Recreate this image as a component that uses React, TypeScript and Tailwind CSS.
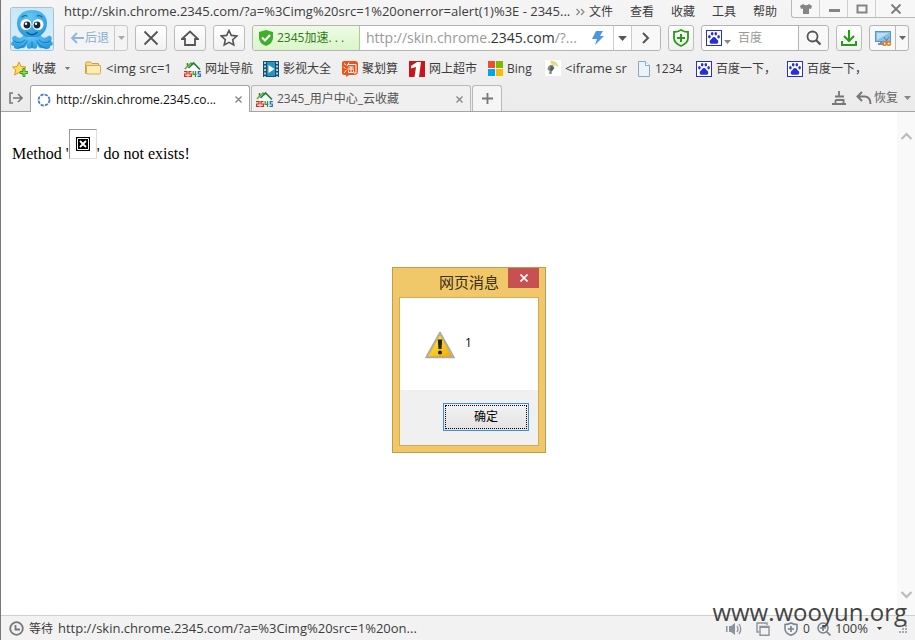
import React from "react";

type Kids = { children?: React.ReactNode };

const toolButton =
  "flex h-[26px] shrink-0 items-center justify-center rounded-[3px] border border-[#bcbcbc] bg-linear-to-b from-white to-[#f1f1f1]";

function Caret({ className = "text-[#888]" }: { className?: string }) {
  return (
    <svg viewBox="0 0 7 4" className={`h-1 w-[7px] shrink-0 ${className}`} aria-hidden="true">
      <path d="M0 0H7L3.5 4Z" fill="currentColor" />
    </svg>
  );
}

function Icon({ children, className = "size-4", box = "0 0 16 16" }: Kids & { className?: string; box?: string }) {
  return (
    <svg viewBox={box} className={`shrink-0 ${className}`} fill="none" aria-hidden="true">
      {children}
    </svg>
  );
}

function Octopus() {
  return (
    <Icon box="0 0 44 44" className="size-full">
      <defs>
        <linearGradient id="avatarBg" x1="0" y1="0" x2="0" y2="1">
          <stop offset="0" stopColor="#c9e6f8" />
          <stop offset="1" stopColor="#d9eefa" />
        </linearGradient>
        <radialGradient id="skin" cx=".45" cy=".25" r=".8">
          <stop offset="0" stopColor="#62c6f5" />
          <stop offset="1" stopColor="#2696dc" />
        </radialGradient>
      </defs>
      <rect x=".5" y=".5" width="43" height="43" rx="2" fill="url(#avatarBg)" stroke="#a3c3d8" />
      <path d="M14 26C13 31 9 32 6 29C3 28 1 31 3 34C0 36 1 39 4 39C3 42 8 43 11 41C14 42 16 40 17 37C16 41 18 43 22 41C26 43 28 41 27 37C28 40 30 42 33 41C36 43 41 42 40 39C43 39 44 36 41 34C43 31 41 28 38 29C35 32 31 31 30 26Z" fill="url(#skin)" />
      <path d="M22 3C12.500 3 7 9 7 16C7 24 12 28 16 30H28C32 28 37 24 37 16C37 9 31.500 3 22 3Z" fill="url(#skin)" />
      <path d="M4 34Q10 38 15 33M40 34Q34 38 29 33M9 41Q15 39 17 34M35 41Q29 39 27 34M22 35V40" stroke="#1679bd" strokeWidth="1" strokeLinecap="round" />
      <path d="M12 10Q14 8 17 9M32 10Q30 8 27 9" stroke="#1468a5" strokeWidth="1.200" strokeLinecap="round" />
      <circle cx="16" cy="17.500" r="5.500" fill="#fff" />
      <circle cx="28" cy="17.500" r="5.500" fill="#fff" />
      <circle cx="17" cy="18" r="3.400" fill="#12294a" />
      <circle cx="27" cy="18" r="3.400" fill="#12294a" />
      <circle cx="16" cy="16.700" r="1.200" fill="#fff" />
      <circle cx="26" cy="16.700" r="1.200" fill="#fff" />
      <path d="M17 25.500Q22 30 27 25.500" stroke="#0d578c" strokeWidth="1.300" strokeLinecap="round" />
    </Icon>
  );
}

function FolderIcon() {
  return (
    <Icon className="h-4 w-[18px]" box="0 0 18 16">
      <path d="M1.500 3.500Q1.500 2 3 2H6.500L8 3.500H14.500V13.500H1.500Z" fill="#f5dc8b" stroke="#c9a044" />
      <path d="M2.500 5.500H16.500V12.500Q16.500 14 15 14H4Q2.500 14 2.500 12.500Z" fill="#fceeb4" stroke="#d4ab4d" />
    </Icon>
  );
}

function HouseIcon() {
  return (
    <Icon className="h-4 w-[17px]" box="0 0 17 16">
      <path d="M3.500 7V10H13.500V7L8.500 3Z" fill="#fff" />
      <path d="M3.500 2V6" stroke="#8a5a2b" strokeWidth="1.500" />
      <path d="M.8 8L7 2L9 4" stroke="#43b04a" strokeWidth="1.400" />
      <path d="M4.500 7L9.500 2L16 8.500" stroke="#267f31" strokeWidth="1.600" />
      <path d="M0 10.600H3V13H.6V15.400H3.500" stroke="#e02a1d" strokeWidth="1.200" />
      <path d="M7.500 10.600H5V13H7.500V15.400H4.500" stroke="#e02a1d" strokeWidth="1.200" />
      <path d="M9.200 10V13.400H12.500M11.500 10V16" stroke="#2a9a38" strokeWidth="1.200" />
      <path d="M16.800 10.600H14.300V13H16.300V15.400H13.500" stroke="#246cc2" strokeWidth="1.200" />
    </Icon>
  );
}

function FilmIcon() {
  return (
    <Icon>
      <rect width="16" height="16" fill="#14506f" />
      <rect x="4" y="1" width="8" height="14" fill="#2a93c3" />
      <path d="M2 1V16M14 1V16" stroke="#d7edf7" strokeWidth="1.600" strokeDasharray="2 1.500" />
      <path d="M5.500 4L11.500 8L5.500 12Z" fill="#fff" />
    </Icon>
  );
}

function TaoIcon() {
  return (
    <Icon>
      <path d="M2 0H13Q16 0 16 3V10Q16 14 12 14H7L4 16V14H2Q0 14 0 12V2Q0 0 2 0Z" fill="#e9551d" />
      <path d="M2 2.500L4 4M1.500 6L3.500 7.500M2 12L4.500 9M7 1.500L5 5M6 3.500H14V12H12M6.500 6H11.500M5.500 8H12M9 6V11.500M6.500 9.500V11.500H11.500V9.500" stroke="#fff" strokeWidth="1" />
    </Icon>
  );
}

function RedOneIcon() {
  return (
    <Icon>
      <rect width="16" height="16" fill="#c9161d" />
      <path d="M2 5L8 1H12L10 16H5.500L7 6L2 7.500Z" fill="#fff" />
    </Icon>
  );
}

function WindowsIcon() {
  return (
    <Icon className="size-[15px]" box="0 0 15 15">
      <path d="M0 0H7V7H0Z" fill="#ee5024" />
      <path d="M8 0H15V7H8Z" fill="#80bb01" />
      <path d="M0 8H7V15H0Z" fill="#03a5f0" />
      <path d="M8 8H15V15H8Z" fill="#ffb902" />
    </Icon>
  );
}

function BulbIcon() {
  return (
    <Icon>
      <rect width="16" height="16" fill="#fff" />
      <path d="M5 1C9 0 13 2 13 7L10 5.500Q8 5 6 3.500Z" fill="#e4dc7b" />
      <path d="M3 7Q5 4 8 5L9.500 8L7 11L6.500 14H4L4.500 11L2.500 9.500Z" fill="#868b87" />
      <path d="M6 6L9 8L7 11L5 10Z" fill="#535a56" />
    </Icon>
  );
}

function PageIcon() {
  return (
    <Icon className="h-4 w-[14px]" box="0 0 14 16">
      <path d="M1.500 .5H8.500L12.500 4.500V15.500H1.500Z" fill="#eaf3fa" stroke="#8aa9c0" />
      <path d="M8.500 .5V4.500H12.500" fill="#fff" stroke="#8aa9c0" />
    </Icon>
  );
}

function PawIcon() {
  return (
    <Icon>
      <rect x=".5" y=".5" width="15" height="15" fill="#fff" stroke="#2530d6" />
      <g fill="#2530d6">
        <ellipse cx="3.400" cy="6.700" rx="1.300" ry="1.700" />
        <ellipse cx="6.200" cy="3.800" rx="1.300" ry="1.800" />
        <ellipse cx="9.800" cy="3.800" rx="1.300" ry="1.800" />
        <ellipse cx="12.600" cy="6.700" rx="1.300" ry="1.700" />
        <path d="M8 7C9.800 7 9.800 8.700 11.600 10C13 11.500 12.200 13.800 10.300 13.800C9 13.800 7 13.800 5.700 13.800C3.800 13.800 3 11.500 4.400 10C6.200 8.700 6.200 7 8 7Z" />
      </g>
    </Icon>
  );
}

function StarPlusIcon() {
  return (
    <Icon>
      <path d="M7 1L9 5.500L14 6L10 9L11.500 14L7 11.500L2.500 14L3.800 9L.5 6L5 5.500Z" fill="#ffdc5e" stroke="#dd9a17" />
      <path d="M11 7.500H13V10.500H16V12.500H13V15.500H11V12.500H8V10.500H11Z" fill="#8be05a" stroke="#2f9a1c" strokeWidth=".9" />
    </Icon>
  );
}

function TitleRow() {
  return (
    <div className="flex h-6 items-start">
      <div className="flex h-6 min-w-0 flex-1 items-center gap-1">
        <h1 className="min-w-0 flex-1 text-[13px] font-normal whitespace-nowrap">
          http://skin.chrome.2345.com/?a=%3Cimg%20src=1%20onerror=alert(1)%3E - 2345...
        </h1>
        <button aria-label="更多" className="shrink-0">
          <Icon className="h-2 w-[9px]" box="0 0 9 8">
            <path d="M.5 1L3.500 4L.5 7M5 1L8 4L5 7" stroke="#888" strokeWidth="1.200" />
          </Icon>
        </button>
      </div>
      <nav className="flex h-6 shrink-0 items-center gap-[17px] pr-[14px] pl-1">
        {["文件", "查看", "收藏", "工具", "帮助"].map((label) => (
          <button key={label}>{label}</button>
        ))}
      </nav>
      <div className="flex h-[18px] shrink-0 divide-x divide-[#cfcfcf] rounded-bl-[3px] border-b border-l border-[#b9b9b9] bg-[#f7f7f7]">
        <button aria-label="皮肤" className="flex w-7 items-center justify-center">
          <Icon className="h-[10px] w-3" box="0 0 12 10">
            <path d="M3 0Q6 2.500 9 0L12 2L11 5L9 4.500V10H3V4.500L1 5L0 2Z" fill="#858585" />
          </Icon>
        </button>
        <button aria-label="最小化" className="flex w-7 items-center justify-center">
          <Icon className="h-[10px] w-3" box="0 0 12 10"><path d="M1 6.500H12" stroke="#858585" strokeWidth="3" /></Icon>
        </button>
        <button aria-label="最大化" className="flex w-7 items-center justify-center">
          <Icon className="h-[10px] w-3" box="0 0 12 10"><path d="M1.500 1.500H10.500V8.500H1.500Z" stroke="#858585" strokeWidth="2" /></Icon>
        </button>
        <button aria-label="关闭" className="flex w-[39px] items-center justify-center">
          <Icon className="h-[10px] w-3" box="0 0 12 10"><path d="M1.500 .5L10.500 9.500M10.500 .5L1.500 9.500" stroke="#777" strokeWidth="1.800" /></Icon>
        </button>
      </div>
    </div>
  );
}

function ToolRow() {
  return (
    <div className="flex items-center gap-[7px] pt-px pr-[6px]">
      <div className="flex h-[26px] w-16 shrink-0 divide-x divide-[#c9c9c9] rounded-[3px] border border-[#c9c9c9] bg-[#f4f4f4]">
        <button className="flex flex-1 items-center justify-center gap-px text-[#8aaed6]">
          <Icon className="h-3 w-[14px]" box="0 0 14 12"><path d="M7 1L2 6L7 11M2 6H14" stroke="#8db5df" strokeWidth="1.800" /></Icon>
          后退
        </button>
        <button aria-label="历史" className="flex w-3 items-center justify-center"><Caret className="text-[#aaa]" /></button>
      </div>
      <button aria-label="停止" className={`w-8 ${toolButton}`}>
        <Icon><path d="M1.500 1.500L14.500 14.500M14.500 1.500L1.500 14.500" stroke="#555" strokeWidth="1.800" /></Icon>
      </button>
      <button aria-label="主页" className={`w-8 ${toolButton}`}>
        <Icon className="h-4 w-[18px]" box="0 0 18 16"><path d="M1 9L9 1.500L17 9H14V15H4V9Z" stroke="#555" strokeWidth="1.800" /></Icon>
      </button>
      <button aria-label="加入收藏" className={`w-8 ${toolButton}`}>
        <Icon className="size-[18px]" box="0 0 18 18"><path d="M9 1.500L11.300 6.400L16.700 7L12.700 10.700L13.800 16L9 13.300L4.200 16L5.300 10.700L1.300 7L6.700 6.400Z" stroke="#555" strokeWidth="1.600" /></Icon>
      </button>
      <div className="flex h-[26px] min-w-0 flex-1 rounded-[3px] border border-[#b4b4b4] bg-white">
        <button className="flex w-[107px] shrink-0 items-center gap-1 rounded-l-[3px] border-r border-[#a6cf93] bg-linear-to-b from-[#eefbe6] to-[#dbf6cb] pl-[6px] text-[#2c7a14]">
          <Icon className="h-4 w-[14px]" box="0 0 14 16">
            <path d="M7 0L14 2V8Q14 13 7 16Q0 13 0 8V2Z" fill="#3fae2c" />
            <path d="M3 7.500L6 10.500L11 5" stroke="#fff" strokeWidth="2" />
          </Icon>
          2345加速. . .
        </button>
        <div className="relative flex min-w-0 flex-1 items-center">
          <input aria-label="地址" className="peer h-full w-full min-w-0 bg-transparent px-[6px] text-sm outline-none" />
          <span className="pointer-events-none absolute inset-x-0 overflow-hidden pl-[6px] text-sm whitespace-nowrap text-[#999] peer-focus:hidden">
            http://skin.chrome.<span className="text-[#333]">2345.com</span>/?...
          </span>
        </div>
        <button aria-label="极速模式" className="flex w-[30px] shrink-0 items-center justify-center">
          <Icon className="h-[14px] w-3" box="0 0 12 14"><path d="M4 0H11L8 5H12L3 14L5 8H0Z" fill="#4a98df" /></Icon>
        </button>
        <button aria-label="展开地址" className="flex w-[18px] shrink-0 items-center justify-center border-l border-[#ccc]"><Caret className="h-[5px] w-[9px] text-[#555]" /></button>
        <button aria-label="转到" className="flex w-[29px] shrink-0 items-center justify-center rounded-r-[3px] border-l border-[#ccc] bg-[#f8f8f8]">
          <Icon className="h-3 w-2" box="0 0 8 12"><path d="M1 1L6 6L1 11" stroke="#555" strokeWidth="2" /></Icon>
        </button>
      </div>
      <button aria-label="安全" className={`w-[26px] ${toolButton}`}>
        <Icon className="h-[18px] w-4" box="0 0 16 18">
          <path d="M8 1Q11 3 15 3V9Q15 14 8 17Q1 14 1 9V3Q5 3 8 1Z" stroke="#279b18" strokeWidth="1.800" />
          <path d="M8 5V13M4 9H12" stroke="#279b18" strokeWidth="2" />
        </Icon>
      </button>
      <div className="flex h-[26px] w-32 shrink-0 rounded-[3px] border border-[#b4b4b4] bg-white">
        <button aria-label="搜索引擎" className="flex shrink-0 items-center gap-[2px] pl-1"><PawIcon /><span className="pt-2"><Caret /></span></button>
        <input aria-label="搜索" placeholder="百度" className="min-w-0 flex-1 pl-[7px] outline-none placeholder:text-[#999]" />
        <button aria-label="搜索" className="flex w-[30px] shrink-0 items-center justify-center rounded-r-[3px] border-l border-[#b4b4b4] bg-[#f8f8f8]">
          <Icon><circle cx="6.500" cy="6.500" r="5" stroke="#555" strokeWidth="1.800" /><path d="M10 10L14.500 14.500" stroke="#555" strokeWidth="2.200" /></Icon>
        </button>
      </div>
      <button aria-label="下载" className={`w-[26px] ${toolButton}`}>
        <Icon><path d="M8 0V11M3 6L8 11L13 6M1 11V15H15V11" stroke="#279b18" strokeWidth="2" /></Icon>
      </button>
      <div className="flex h-[26px] w-10 shrink-0 divide-x divide-[#bbb] rounded-[3px] border border-[#b4b4b4] bg-[#f8f8f8]">
        <button aria-label="截图" className="flex flex-1 items-center justify-center">
          <Icon>
            <rect x=".5" y="1.500" width="15" height="10" fill="#7fc0ec" stroke="#5e94bd" />
            <path d="M2 3H14L2 10Z" fill="#b9def6" />
            <path d="M3 14H9M6 12V14" stroke="#6895b8" strokeWidth="2" />
            <path d="M9 7L12 11M14 7L11 11" stroke="#777" />
            <circle cx="9.500" cy="13.500" r="1.800" stroke="#e27a1c" strokeWidth="1.500" />
            <circle cx="13.700" cy="13.500" r="1.800" stroke="#e27a1c" strokeWidth="1.500" />
          </Icon>
        </button>
        <button aria-label="截图选项" className="flex w-3 items-center justify-center"><Caret className="text-[#666]" /></button>
      </div>
    </div>
  );
}

const bookmarks: { icon: React.ReactNode; label: string; width: string }[] = [
  { icon: <FolderIcon />, label: "<img src=1", width: "w-[89px] text-[13px]" },
  { icon: <HouseIcon />, label: "网址导航", width: "w-[68px]" },
  { icon: <FilmIcon />, label: "影视大全", width: "w-[68px]" },
  { icon: <TaoIcon />, label: "聚划算", width: "w-14" },
  { icon: <RedOneIcon />, label: "网上超市", width: "w-[68px]" },
  { icon: <WindowsIcon />, label: "Bing", width: "w-[46px]" },
  { icon: <BulbIcon />, label: "<iframe sr", width: "w-[81px] text-[13px]" },
  { icon: <PageIcon />, label: "1234", width: "w-12" },
  { icon: <PawIcon />, label: "百度一下，", width: "w-20" },
  { icon: <PawIcon />, label: "百度一下，", width: "w-20" },
];

function BookmarkRow() {
  return (
    <div className="flex h-[34px] items-center gap-[11px] overflow-hidden pt-px pl-[11px]">
      <button className="flex w-[61px] shrink-0 items-center gap-1"><StarPlusIcon />收藏<span className="pl-1"><Caret className="h-[3px] w-[5px] text-[#777]" /></span></button>
      {bookmarks.map(({ icon, label, width }, i) => (
        <a key={i} href="#" className={`flex shrink-0 items-center gap-1 whitespace-nowrap ${width}`}>{icon}{label}</a>
      ))}
    </div>
  );
}

function CloseX() {
  return <Icon className="size-[7px]" box="0 0 7 7"><path d="M.5 .5L6.500 6.500M6.500 .5L.5 6.500" stroke="#888" strokeWidth="1.400" /></Icon>;
}

function TabRow() {
  return (
    <div className="flex h-[27px] items-end border-b border-[#a3a3a3]">
      <button aria-label="侧边栏" className="flex h-[26px] w-[29px] shrink-0 items-center justify-center">
        <Icon className="h-3 w-[14px]" box="0 0 14 12"><path d="M4 1H1V11H4M4 6H13M9 2L13 6L9 10" stroke="#777" strokeWidth="1.600" /></Icon>
      </button>
      <div className="-mb-px flex h-[27px] w-[220px] items-center gap-[5px] rounded-t-[3px] border border-b-0 border-[#a3a3a3] bg-white pt-px pr-[7px] pl-[6px] text-[#111]">
        <Icon className="size-[14px]" box="0 0 14 14"><circle cx="7" cy="7" r="5.500" stroke="#5277c8" strokeWidth="1.800" strokeDasharray="3.200 1.120" /></Icon>
        <span className="min-w-0 flex-1 whitespace-nowrap">http://skin.chrome.2345.co...</span>
        <button aria-label="关闭标签"><CloseX /></button>
      </div>
      <div className="ml-px flex h-[26px] w-[220px] items-center gap-1 rounded-t-[3px] border border-b-0 border-[#b9b9b9] bg-[#f0f0f0] pt-px pr-[7px] pl-1 text-[#555]">
        <HouseIcon />
        <span className="min-w-0 flex-1 whitespace-nowrap">2345_用户中心_云收藏</span>
        <button aria-label="关闭标签"><CloseX /></button>
      </div>
      <button aria-label="新标签" className="ml-px flex h-[26px] w-[30px] items-center justify-center rounded-t-[3px] border border-b-0 border-[#b9b9b9] bg-[#f5f5f5]">
        <Icon className="size-[11px]" box="0 0 11 11"><path d="M5.500 0V11M0 5.500H11" stroke="#777" strokeWidth="1.800" /></Icon>
      </button>
      <div className="ml-auto flex h-[26px] items-center gap-[10px] pr-1 text-[#666]">
        <button aria-label="清理"><Icon className="size-[14px]" box="0 0 14 14"><path d="M7 0V5M3 5.500H12M3.500 9H11.500V12.500M3.500 9V12.500M0 13H14" stroke="#777" strokeWidth="1.800" /></Icon></button>
        <button className="flex items-center gap-[2px]">
          <Icon className="h-[14px] w-4" box="0 0 16 14"><path d="M6 1L1.500 5.500L6 10M2 5.500H9Q14.500 6 14.500 13" stroke="#777" strokeWidth="2" /></Icon>
          恢复
          <span className="pl-1"><Caret /></span>
        </button>
      </div>
    </div>
  );
}

function AlertDialog() {
  return (
    <section role="alertdialog" aria-labelledby="alert-title" className="absolute top-[267px] left-[391px] w-[154px] border border-[#c49a4c] bg-[#f0c869] px-[6px] pb-[6px] text-black">
      <header className="flex h-[29px] items-start justify-end">
        <h2 id="alert-title" className="pt-1 pr-[9px] text-[15px] leading-5 text-[#3a2d10]">网页消息</h2>
        <button aria-label="关闭" className="flex h-5 w-[31px] items-center justify-center bg-[#c75050]">
          <Icon className="size-2" box="0 0 8 8"><path d="M.5 .5L7.500 7.500M7.500 .5L.5 7.500" stroke="#fff" strokeWidth="1.600" /></Icon>
        </button>
      </header>
      <div className="border border-[#d2ab58] bg-[#f0f0f0]">
        <div className="flex h-[92px] items-start gap-[10px] bg-white pt-[33px] pl-[25px]">
          <Icon className="h-7 w-[30px]" box="0 0 30 28">
            <defs>
              <linearGradient id="warn" x1="0" y1="0" x2="1" y2="1">
                <stop offset="0" stopColor="#fff04a" />
                <stop offset="1" stopColor="#f0a800" />
              </linearGradient>
            </defs>
            <path d="M15 1.500L29 26.500H1Z" fill="#ddd" stroke="#a9a9b2" strokeWidth="1.600" strokeLinejoin="round" />
            <path d="M15 3.500L27 25.500H3Z" fill="url(#warn)" stroke="#c7a11a" strokeWidth=".6" />
            <path d="M12.800 8.500H17.200L16.500 18H13.500Z" fill="#222" />
            <circle cx="15" cy="21.500" r="2" fill="#222" />
          </Icon>
          <p className="pt-1 leading-4">1</p>
        </div>
        <div className="flex h-[55px] items-start justify-end pt-[13px] pr-[9px]">
          <button className="h-7 w-[86px] border border-[#3c8fe0] bg-linear-to-b from-[#f2f2f2] to-[#e3e3e3] p-px">
            <span className="flex h-full items-center justify-center border border-dotted border-black">确定</span>
          </button>
        </div>
      </div>
    </section>
  );
}

function PageArea() {
  return (
    <main className="flex min-h-0 flex-1 justify-between bg-white">
      <p className="flex h-[52px] items-end pl-[11px] font-['Liberation_Serif',serif] text-base leading-5 text-black">
        <span>Method '</span>
        <span role="img" aria-label="图片无法显示" className="mb-[5px] flex h-[30px] w-7 items-center justify-center border border-t-[#999] border-r-[#ddd] border-b-[#ddd] border-l-[#999]">
          <Icon className="size-[14px]" box="0 0 14 14"><path d="M0 0H14V14H0Z" fill="#000" /><path d="M1.500 1.500H12.500V12.500H1.500Z" stroke="#fff" /><path d="M4 4L10 10M10 4L4 10" stroke="#fff" strokeWidth="1.800" /></Icon>
        </span>
        <span>' do not exists!</span>
      </p>
      <div className="flex w-[18px] flex-col items-center justify-between bg-[#f9f9f9] pt-5 pb-4">
        <button aria-label="向上滚动"><Icon className="h-2 w-[11px]" box="0 0 11 8"><path d="M.5 7L5.500 2L10.500 7" stroke="#bbb" strokeWidth="2.200" /></Icon></button>
        <button aria-label="向下滚动"><Icon className="h-2 w-[11px]" box="0 0 11 8"><path d="M.5 1L5.500 6L10.500 1" stroke="#bbb" strokeWidth="2.200" /></Icon></button>
      </div>
    </main>
  );
}

function StatusBar() {
  return (
    <footer className="flex h-[25px] shrink-0 items-center justify-between border-t border-[#cfcfcf] bg-[#f2f2f2] px-2 pt-[2px]">
      <p className="flex items-center gap-[5px]">
        <Icon className="size-[15px]" box="0 0 15 15"><circle cx="7.500" cy="7.500" r="6.300" stroke="#777" strokeWidth="1.800" /><path d="M6.500 4V8.500H11" stroke="#777" strokeWidth="1.800" /></Icon>
        <span>等待</span>
        <span className="text-[13px]">http://skin.chrome.2345.com/?a=%3Cimg%20src=1%20on...</span>
      </p>
      <div className="flex items-center">
        <button aria-label="声音" className="mr-[14px]">
          <Icon className="h-[14px] w-4" box="0 0 16 14"><path d="M0 4H1.500V10H0ZM3 4H5L9 1V13L5 10H3Z" fill="#8a939c" /><path d="M11 4Q13 7 11 10M13 2Q16.500 7 13 12" stroke="#8a939c" strokeWidth="1.300" /></Icon>
        </button>
        <button aria-label="窗口" className="mr-[14px]">
          <Icon className="size-[14px]" box="0 0 14 14"><path d="M3 10H1V1H11V3M4 4.500H13V13.200H4Z" stroke="#8a939c" strokeWidth="1.400" /><path d="M4 5H13" stroke="#8a939c" strokeWidth="2" /></Icon>
        </button>
        <button className="mr-[7px] flex items-center gap-[5px]">
          <Icon className="size-[14px]" box="0 0 14 14"><path d="M7 1Q10 2.500 13 2.500V7Q13 11 7 13.300Q1 11 1 7V2.500Q4 2.500 7 1Z" stroke="#77838f" strokeWidth="1.500" /><path d="M7 4V10M4 7H10" stroke="#77838f" strokeWidth="1.600" /></Icon>
          0
        </button>
        <button className="flex items-center gap-1">
          <Icon className="size-[14px]" box="0 0 14 14"><circle cx="6" cy="6" r="5" stroke="#77838f" strokeWidth="1.500" /><path d="M6 3V9M3 6H9M9.500 9.500L13.500 13.500" stroke="#77838f" strokeWidth="1.700" /></Icon>
          <span className="text-[13px]">100%</span>
          <span className="pl-1"><Caret className="h-[3px] w-[5px]" /></span>
        </button>
        <Icon className="ml-4 size-2" box="0 0 8 8"><path d="M6 0H8V2H6ZM3 3H5V5H3ZM6 3H8V5H6ZM0 6H2V8H0ZM3 6H5V8H3ZM6 6H8V8H6Z" fill="#aaa" /></Icon>
      </div>
    </footer>
  );
}

export default function App() {
  return (
    <div className="relative flex h-screen flex-col border-l border-[#777] bg-[#f0f0f0] font-['Open_Sans','Noto_Sans_CJK_SC',sans-serif] text-xs text-[#3c3c3c]">
      <header className="shrink-0 bg-linear-to-b from-[#f5f5f5] to-[#ebebeb]">
        <div className="flex">
          <div className="mt-[7px] mr-[10px] ml-[9px] size-11 shrink-0"><Octopus /></div>
          <div className="min-w-0 flex-1"><TitleRow /><ToolRow /></div>
        </div>
        <BookmarkRow />
        <TabRow />
      </header>
      <PageArea />
      <StatusBar />
      <AlertDialog />
      <div className="pointer-events-none absolute right-2 bottom-3 text-2xl text-[#444]">www.wooyun.org</div>
    </div>
  );
}
